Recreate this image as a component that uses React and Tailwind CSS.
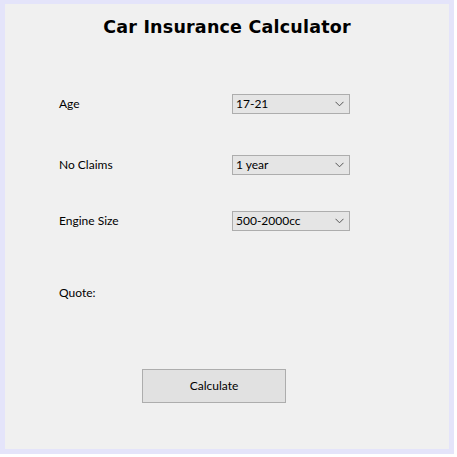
import React from "react";

function Chevron() {
  return (
    <svg width="9" height="6" viewBox="0 0 9 6" className="shrink-0">
      <path d="M0.5 0.8 L4.5 4.8 L8.5 0.8" fill="none" stroke="#555555" strokeWidth="1" />
    </svg>
  );
}

function Select({ value }) {
  return (
    <div className="w-[118px] h-[20px] border border-[#adadad] bg-[#e5e5e5] flex items-center justify-between pl-[3px] pr-[5px] text-[12px] text-black">
      <span>{value}</span>
      <Chevron />
    </div>
  );
}

function Row({ label, value, mt }) {
  return (
    <div className={`flex items-center ${mt}`}>
      <div className="w-[173px] text-[12px] text-black">{label}</div>
      <Select value={value} />
    </div>
  );
}

export default function App() {
  return (
    <div className="w-[457px] h-[457px] bg-white" style={{ fontFamily: 'Lato, "Noto Sans", sans-serif' }}>
      <div className="w-[454px] h-[454px] bg-[#e4e4fa] pl-[5px] pt-[4px] pr-[5px] pb-[5px]">
        <div className="w-full h-full bg-[#f0f0f0] flex flex-col pl-[54px]">
          <div
            className="mt-[13px] -ml-[54px] text-center text-[17.5px] font-black text-black tracking-[0.2px] leading-[20px]"
            style={{ fontFamily: '"DejaVu Sans", sans-serif' }}
          >
            Car Insurance Calculator
          </div>
          <div className="mt-[57px]">
            <Row label="Age" value="17-21" mt="" />
          </div>
          <Row label="No Claims" value="1 year" mt="mt-[41px]" />
          <Row label="Engine Size" value="500-2000cc" mt="mt-[36px]" />
          <div className="mt-[54px] text-[12px] text-black leading-[16px]">Quote:</div>
          <div className="mt-[68px] ml-[83px] w-[144px] h-[34px] border border-[#adadad] bg-[#e1e1e1] flex items-center justify-center text-[12px] text-black">
            Calculate
          </div>
        </div>
      </div>
    </div>
  );
}
